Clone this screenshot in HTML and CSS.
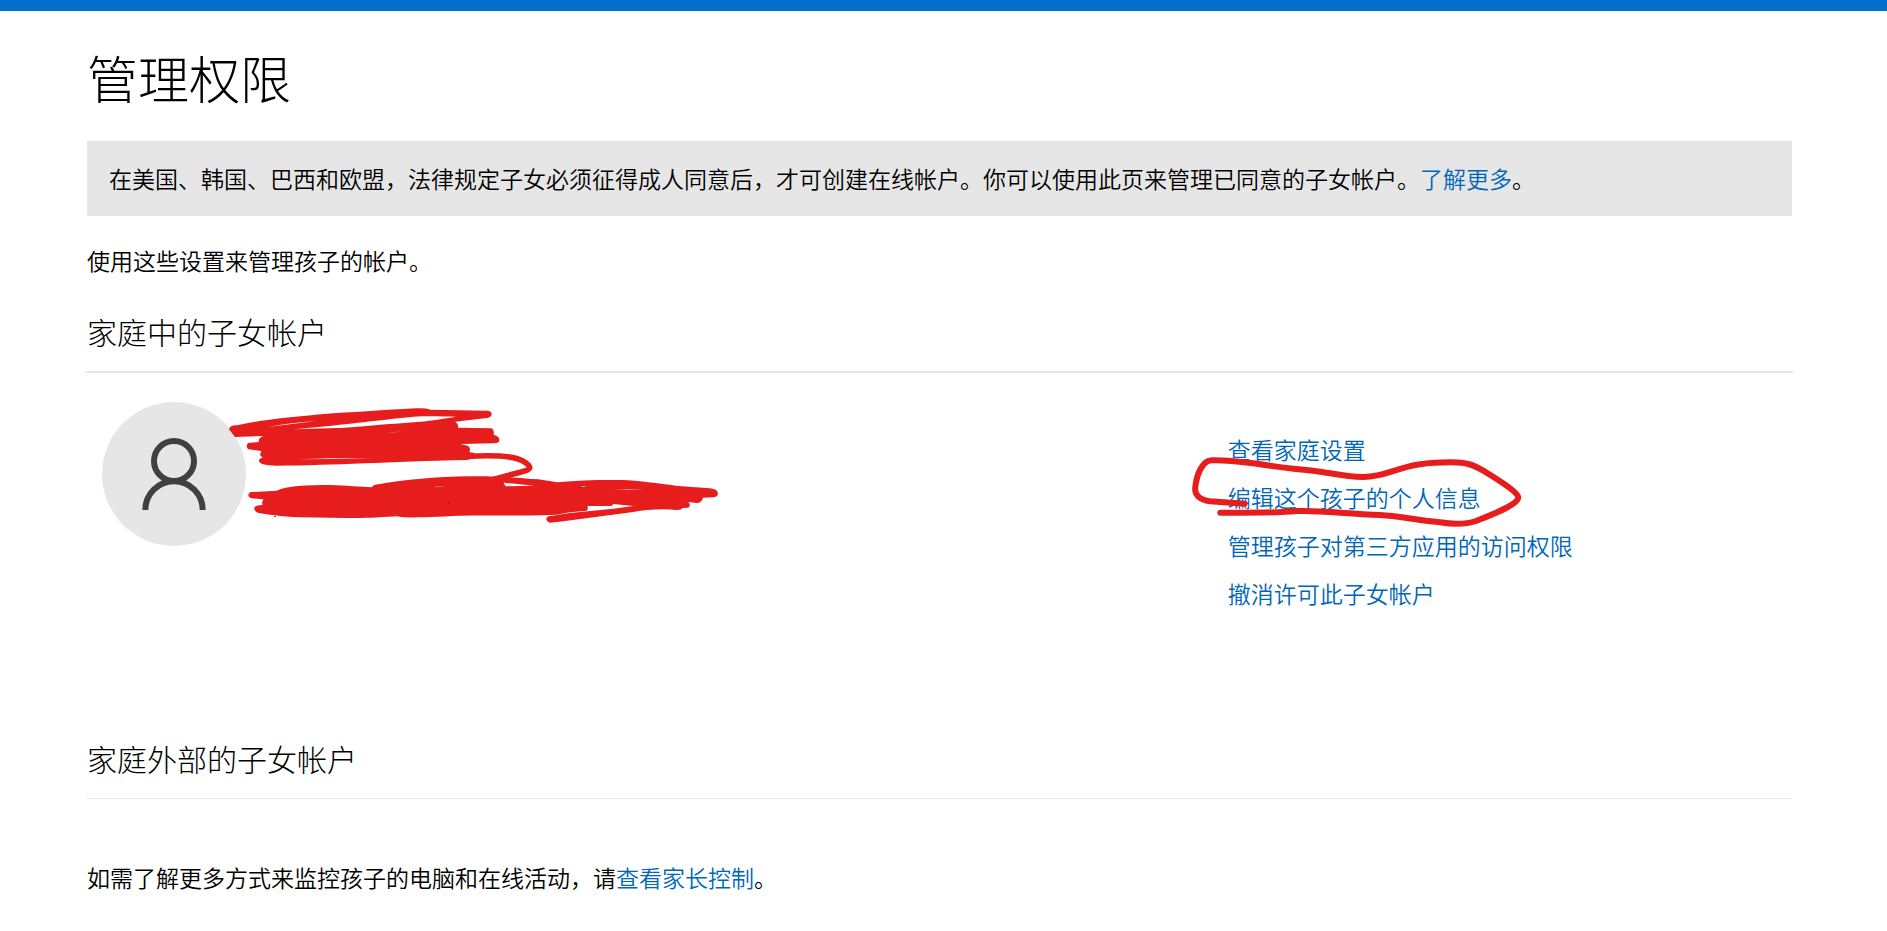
FILE: index.html
```
<!DOCTYPE html>
<html lang="zh-CN">
<head>
  <meta charset="utf-8">
  <title>管理权限</title>
  <link rel="stylesheet" href="styles.css">
</head>
<body>
  <header class="topbar"></header>

  <main class="container">
    <h1>管理权限</h1>

    <div class="banner">在美国、韩国、巴西和欧盟，法律规定子女必须征得成人同意后，才可创建在线帐户。你可以使用此页来管理已同意的子女帐户。<a href="#">了解更多</a>。</div>

    <p class="intro">使用这些设置来管理孩子的帐户。</p>

    <section class="familia">
      <h2>家庭中的子女帐户</h2>
      <div class="child">
        <div class="profile">
          <svg class="avatar" viewBox="0 0 432 432" role="img" aria-label="头像">
            <circle cx="216" cy="216" r="216" fill="#e6e6e6"/>
            <g fill="none" stroke="#404040" stroke-width="18">
              <circle cx="216" cy="177" r="60"/>
              <path d="M130 324A86 86 0 0 1 302 324"/>
            </g>
          </svg>

          <!-- name and e-mail, crossed out -->
          <svg class="scribble" viewBox="0 0 1560 480" aria-hidden="true">
            <g fill="#e71d1d">
              <path d="M27 118Q30 105 50 106C110 92 200 82 340 70C430 65 520 58 590 55Q620 54 630 59L804 62Q816 65 815 74Q812 82 800 84L706 95Q716 102 714 113L815 115Q824 122 821 134L832 139Q842 148 836 156Q832 160 820 160L722 162L745 168Q753 176 748 187L762 188L762 205L740 210C500 215 350 226 170 227C140 226 120 224 117 213Q116 205 128 203L120 195L124 183L85 178Q76 168 84 159L116 156Q114 145 130 138L45 141Q40 135 27 118Z"/>
              <path d="M85 316Q86 307 95 306L170 302C200 288 260 285 330 285C380 287 420 290 456 292Q458 284 475 283C560 268 640 261 750 259C850 258 900 265 955 268L1012 277C1080 270 1150 269 1210 270C1280 274 1340 284 1385 289L1470 295Q1494 298 1494 311Q1492 321 1480 322L1449 323Q1446 338 1430 339L1388 334L1405 336Q1414 345 1405 353L1388 354Q1384 361 1370 360C1330 356 1280 358 1240 366L1030 394L990 398Q978 394 979 386Q980 378 992 378L1050 369L1180 356L1240 348L1180 342L1175 348L1102 348Q1106 358 1100 362L1050 367L1010 374C900 378 800 376 720 377C650 380 580 383 550 382L530 379C450 384 400 385 380 384L240 382C180 380 140 372 115 369Q101 362 103 353Q106 346 128 345L126 338L130 328L95 325Q85 322 85 316Z"/>
            </g>
            <path d="M740 199C800 196 865 198 892 206C912 212 929 225 929 233C927 242 900 247 880 252L815 270" fill="none" stroke="#e71d1d" stroke-width="17"/>
            <g fill="#fff">
              <path d="M218 118C340 108 480 90 580 80C620 77 670 79 708 80C660 88 630 93 600 95C500 102 400 112 350 114Z"/>
              <path d="M850 278L942 287L857 289Z"/>
              <path d="M142 112C190 103 240 95 288 94C240 98 190 105 142 112Z"/>
              <path d="M230 208L340 205L455 206L340 207Z"/>
              <path d="M640 292Q656 288 675 289Q656 290 640 292ZM498 127L547 125L520 127Z"/>
              <path d="M1082 289L1100 289L1090 291ZM1184 298L1270 298L1225 299Z"/>
            </g>
            <path d="M163 378h4v3h-4zM684 339h2v2h-2z" fill="#000"/>
          </svg>
        </div>

        <div class="actions">
          <ul>
            <li><a href="#">查看家庭设置</a></li>
            <li><a href="#">编辑这个孩子的个人信息</a></li>
            <li><a href="#">管理孩子对第三方应用的访问权限</a></li>
            <li><a href="#">撤消许可此子女帐户</a></li>
          </ul>
          <!-- circle around the second link -->
          <svg class="mark" viewBox="0 0 1080 360" aria-hidden="true">
            <path d="M194 251L90 244C60 240 42 225 46 200C50 165 66 122 95 121C130 120 180 125 220 130C300 142 350 148 400 152C450 158 490 170 550 171C620 170 640 145 720 133C760 127 790 127 810 127C860 126 880 135 910 152C950 177 1014 215 1015 233C1012 255 940 282 888 303C850 316 810 312 780 307C700 300 660 288 600 285C500 282 420 270 350 273C300 278 250 279 121 278" fill="none" stroke="#e71d1d" stroke-width="18" stroke-linecap="round" stroke-linejoin="round"/>
          </svg>
        </div>
      </div>
    </section>

    <section class="externo">
      <h2>家庭外部的子女帐户</h2>
    </section>

    <p class="more">如需了解更多方式来监控孩子的电脑和在线活动，请<a href="#">查看家长控制</a>。</p>
  </main>
</body>
</html>
```
FILE: styles.css
```
body {
  margin: 0;
  font-family: "Noto Sans CJK SC", sans-serif;
  font-size: 23px;
  font-weight: 350;
  line-height: 31px;
  color: #000;
  background-color: #fff;
}
a {
  color: #0067b8;
  text-decoration: none;
}
.topbar {
  height: 11px;
  background-color: #006fca;
}
.container {
  padding: 34px 95px 32px 87px;
}
h1 {
  margin: 0 0 32px;
  font-size: 51px;
  font-weight: 200;
  line-height: 64px;
}
h2 {
  margin: 0;
  padding-bottom: 20px;
  font-size: 30px;
  font-weight: 200;
  line-height: 40px;
  border-bottom: 1px solid #e6e6e6;
}
.banner {
  padding: 22px;
  background-color: #e6e6e6;
}
.intro {
  margin: 29px 0 35px;
}
.child {
  display: grid;
  grid-template-columns: 2fr 1fr;
  margin: 0 -3px;
  padding-top: 29px;
  border-top: 1px solid #e6e6e6;
}
.profile {
  position: relative;
  padding-left: 18px;
}
.avatar {
  display: block;
  width: 144px;
  height: 144px;
}
.scribble {
  position: absolute;
  top: -12px;
  left: 136px;
  width: 520px;
  height: 160px;
  pointer-events: none;
}
.actions {
  position: relative;
  padding: 32px 3px 0;
}
.actions ul {
  display: flex;
  flex-direction: column;
  gap: 17px;
  margin: 0;
  padding: 0;
  list-style: none;
}
.mark {
  position: absolute;
  top: 18px;
  left: -45px;
  width: 360px;
  height: 120px;
  pointer-events: none;
}
.externo {
  margin-top: 129px;
}
.more {
  margin: 63px 0 0;
}
```
